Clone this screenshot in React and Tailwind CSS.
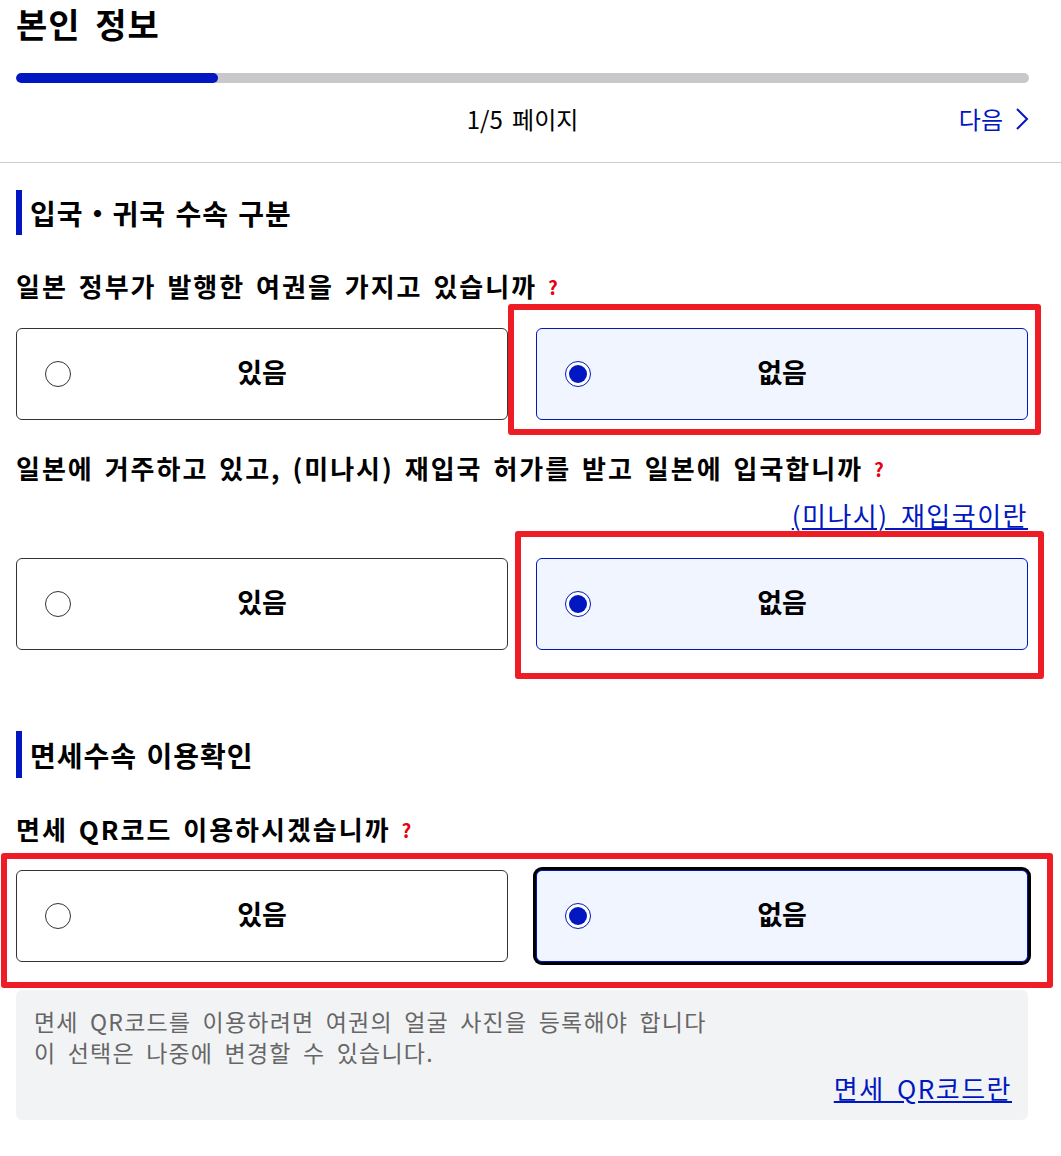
import React from "react";

const font = { fontFamily: '"Noto Sans CJK KR", "Noto Sans", sans-serif' };

function Radio({ checked }) {
  if (checked) {
    return (
      <span className="w-[26px] h-[26px] rounded-full border border-[#0017c1] bg-white flex items-center justify-center shrink-0">
        <span className="w-[18px] h-[18px] rounded-full bg-[#0017c1]" />
      </span>
    );
  }
  return <span className="w-[26px] h-[26px] rounded-full border border-[#333] bg-white shrink-0" />;
}

function Option({ label, checked, focused }) {
  const base = "h-[92px] rounded-[6px] flex items-center px-[28px]";
  const cls = checked
    ? `${base} bg-[#f0f5ff] border border-[#0017c1] ${focused ? "ring-[3px] ring-black" : ""}`
    : `${base} bg-white border border-[#333]`;
  return (
    <div className={cls}>
      <Radio checked={checked} />
      <span className="flex-1 text-center text-[27px] font-bold text-black leading-none mb-[6px]">{label}</span>
      <span className="w-[26px] shrink-0" />
    </div>
  );
}

function Question({ children }) {
  return (
    <div className="h-[36px] flex items-center text-[26px] font-bold text-black tracking-[2px] [word-spacing:3px]">
      {children}
      <span className="ml-[11px] text-[19px] font-bold text-[#e60012] mt-[4px]">?</span>
    </div>
  );
}

function SectionTitle({ children, h }) {
  return (
    <div className={`${h} border-l-[6px] border-[#0017c1] pl-[8px] flex items-center text-[28px] font-bold text-black tracking-[1px] [word-spacing:2px]`}>
      {children}
    </div>
  );
}

export default function App() {
  return (
    <div className="relative w-[1061px] min-h-[1156px] bg-white" style={font}>
      {/* 헤더 */}
      <div className="pl-[16px] pr-[32px]">
        <div className="h-[50px] pb-[4px] flex items-center text-[34px] font-bold text-black tracking-[1px] [word-spacing:6px]">본인 정보</div>
        <div className="mt-[23px] h-[10px] rounded-full bg-[#c8c8cb] overflow-hidden">
          <div className="h-full w-[202px] rounded-full bg-[#0017c1]" />
        </div>
        <div className="relative h-[74px] flex items-center justify-center">
          <span className="text-[24px] text-black [word-spacing:4px] mb-[2px]">1/5 페이지</span>
          <span className="absolute right-0 flex items-center gap-[12px] text-[24px] text-[#0017c1] mb-[2px]">
            다음
            <svg width="14" height="24" viewBox="0 0 14 24" fill="none">
              <path d="M2 2l10 10-10 10" stroke="#0017c1" strokeWidth="2" />
            </svg>
          </span>
        </div>
      </div>
      <div className="mt-[5px] border-b border-[#cccccc]" />

      <div className="pl-[16px] pr-[33px]">
        <div className="mt-[27px]">
          <SectionTitle h="h-[45px]">입국・귀국 수속 구분</SectionTitle>
        </div>

        <div className="mt-[32px]">
          <Question>일본 정부가 발행한 여권을 가지고 있습니까</Question>
        </div>
        <div className="mt-[25px] grid grid-cols-2 gap-[28px]">
          <Option label="있음" />
          <Option label="없음" checked />
        </div>

        <div className="mt-[29px]">
          <Question>일본에 거주하고 있고, (미나시) 재입국 허가를 받고 일본에 입국합니까</Question>
        </div>
        <div className="mt-[13px] h-[32px] flex items-center justify-end">
          <a className="text-[26px] text-[#0017c1] underline tracking-[1.5px] [word-spacing:5px]">(미나시) 재입국이란</a>
        </div>
        <div className="mt-[28px] grid grid-cols-2 gap-[28px]">
          <Option label="있음" />
          <Option label="없음" checked />
        </div>

        <div className="mt-[81px]">
          <SectionTitle h="h-[47px]">면세수속 이용확인</SectionTitle>
        </div>

        <div className="mt-[32px]">
          <Question>면세 QR코드 이용하시겠습니까</Question>
        </div>
        <div className="mt-[24px] grid grid-cols-2 gap-[28px]">
          <Option label="있음" />
          <Option label="없음" checked focused />
        </div>

        <div className="mt-[28px] h-[130px] rounded-[6px] bg-[#f2f3f5] pl-[18px] pr-[16px] pt-[16px]">
          <p className="text-[23px] leading-[31px] text-[#666666] tracking-[1.2px] [word-spacing:5px]">면세 QR코드를 이용하려면 여권의 얼굴 사진을 등록해야 합니다</p>
          <p className="text-[23px] leading-[31px] text-[#666666] tracking-[1.2px] [word-spacing:5px]">이 선택은 나중에 변경할 수 있습니다.</p>
          <div className="mt-[2px] h-[34px] flex items-center justify-end">
            <a className="text-[26px] text-[#0017c1] underline tracking-[1.5px] [word-spacing:5px]">면세 QR코드란</a>
          </div>
        </div>
      </div>

      {/* 빨간 강조 표시 */}
      <div className="absolute left-[508px] top-[304px] w-[533px] h-[131px] border-[6px] border-[#ee1c25] rounded-[3px] pointer-events-none" />
      <div className="absolute left-[515px] top-[531px] w-[529px] h-[148px] border-[6px] border-[#ee1c25] rounded-[3px] pointer-events-none" />
      <div className="absolute left-[1px] top-[853px] w-[1052px] h-[135px] border-[6px] border-[#ee1c25] rounded-[3px] pointer-events-none" />
    </div>
  );
}
